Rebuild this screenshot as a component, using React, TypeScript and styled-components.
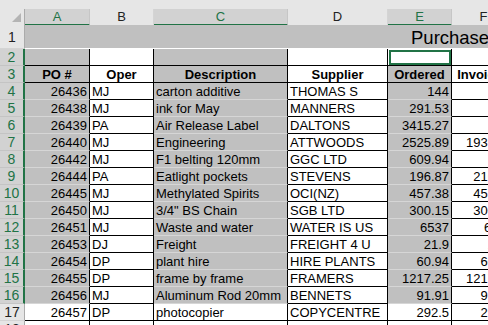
import React from 'react'
import styled, { createGlobalStyle } from 'styled-components'

const GlobalStyle = createGlobalStyle`
  body {
    margin: 0;
    background: #fff;
    font-family: 'Liberation Sans', Arial, sans-serif;
  }
`

const green = '#217346'
const cols = '25px 65px 64px 134px 100px 64px 64px'

const Sheet = styled.div`
  width: 488px;
  height: 325px;
  overflow: hidden;
  background: #fff;
`

const TopBand = styled.div`
  height: 9px;
  background: #e6e6e6;
`

const Row = styled.div<{ $h: number }>`
  display: grid;
  grid-template-columns: ${cols};
  height: ${(p) => p.$h}px;
`

const Corner = styled.div`
  background: #e6e6e6;
  border-right: 1px solid #ababab;
  border-bottom: 1px solid #ababab;
  box-sizing: border-box;
  display: flex;
  align-items: flex-end;
  justify-content: flex-end;
  padding: 0 3px 3px 0;
`

const ColHead = styled.div<{ $sel?: boolean }>`
  box-sizing: border-box;
  background: ${(p) => (p.$sel ? '#d2d2d2' : '#e6e6e6')};
  color: ${(p) => (p.$sel ? green : '#222')};
  border-right: 1px solid ${(p) => (p.$sel ? '#c6c6c6' : '#d4d4d4')};
  border-bottom: ${(p) => (p.$sel ? `2px solid ${green}` : '1px solid #ababab')};
  font-size: 13px;
  line-height: 15px;
  text-align: center;
`

const RowHead = styled.div<{ $sel?: boolean }>`
  box-sizing: border-box;
  background: ${(p) => (p.$sel ? '#d2d2d2' : '#e6e6e6')};
  color: ${(p) => (p.$sel ? green : '#222')};
  border-right: ${(p) => (p.$sel ? `2px solid ${green}` : '1px solid #ababab')};
  border-bottom: 1px solid ${(p) => (p.$sel ? '#c4c4c4' : '#d4d4d4')};
  font-size: 14px;
  display: flex;
  align-items: center;
  justify-content: center;
`

const TitleCell = styled.div`
  grid-column: 2 / -1;
  box-sizing: border-box;
  background: #c0c0c0;
  border-bottom: 1px solid #fff;
  padding: 2px 0 0 386px;
  font-size: 18.5px;
  line-height: 22px;
  white-space: nowrap;
  overflow: hidden;
  color: #000;
`

const Cell = styled.div<{ $gray?: boolean; $align?: string; $bold?: boolean; $soft?: boolean; $active?: boolean }>`
  box-sizing: border-box;
  background: ${(p) => (p.$gray ? '#c0c0c0' : '#fff')};
  border-right: 1px solid #000;
  border-bottom: 1px solid ${(p) => (p.$soft ? '#d6d6d6' : '#000')};
  text-align: ${(p) => p.$align || 'left'};
  font-weight: ${(p) => (p.$bold ? 700 : 400)};
  font-size: 13px;
  line-height: 17px;
  padding: 0 2px;
  white-space: nowrap;
  overflow: hidden;
  color: #000;
  ${(p) => (p.$active ? `outline: 2px solid ${green}; outline-offset: -3px;` : '')}
`

const rows: [number, string, string, string, string, string, string][] = [
  [4, '26436', 'MJ', 'carton additive', 'THOMAS S', '144', ''],
  [5, '26438', 'MJ', 'ink for May', 'MANNERS', '291.53', ''],
  [6, '26439', 'PA', 'Air Release Label', 'DALTONS', '3415.27', ''],
  [7, '26440', 'MJ', 'Engineering', 'ATTWOODS', '2525.89', '1936.89'],
  [8, '26442', 'MJ', 'F1 belting 120mm', 'GGC LTD', '609.94', ''],
  [9, '26444', 'PA', 'Eatlight pockets', 'STEVENS', '196.87', '216.55'],
  [10, '26445', 'MJ', 'Methylated Spirits', 'OCI(NZ)', '457.38', '457.38'],
  [11, '26450', 'MJ', '3/4" BS Chain', 'SGB LTD', '300.15', '300.15'],
  [12, '26451', 'MJ', 'Waste and water', 'WATER IS US', '6537', '6537'],
  [13, '26453', 'DJ', 'Freight', 'FREIGHT 4 U', '21.9', '21.9'],
  [14, '26454', 'DP', 'plant hire', 'HIRE PLANTS', '60.94', '60.94'],
  [15, '26455', 'DP', 'frame by frame', 'FRAMERS', '1217.25', '1217.25'],
  [16, '26456', 'MJ', 'Aluminum Rod 20mm', 'BENNETS', '91.91', '91.91'],
  [17, '26457', 'DP', 'photocopier', 'COPYCENTRE', '292.5', '292.5'],
]

export default function App() {
  return (
    <Sheet>
      <GlobalStyle />
      <TopBand />
      <Row $h={16}>
        <Corner>
          <svg width="9" height="9" viewBox="0 0 9 9">
            <polygon points="9,0 9,9 0,9" fill="#b4b4b4" />
          </svg>
        </Corner>
        {['A', 'B', 'C', 'D', 'E', 'F'].map((c, i) => (
          <ColHead key={c} $sel={i % 2 === 0}>{c}</ColHead>
        ))}
      </Row>
      <Row $h={24}>
        <RowHead>1</RowHead>
        <TitleCell>Purchase Orders</TitleCell>
      </Row>
      <Row $h={17}>
        <RowHead $sel>2</RowHead>
        <Cell $gray />
        <Cell />
        <Cell $gray />
        <Cell />
        <Cell $active />
        <Cell />
      </Row>
      <Row $h={17}>
        <RowHead $sel>3</RowHead>
        <Cell $gray $bold $align="center">PO #</Cell>
        <Cell $bold $align="center">Oper</Cell>
        <Cell $gray $bold $align="center">Description</Cell>
        <Cell $bold $align="center">Supplier</Cell>
        <Cell $gray $bold $align="center">Ordered</Cell>
        <Cell $bold $align="center">Invoiced</Cell>
      </Row>
      {rows.map(([n, po, op, desc, sup, ord, inv]) => {
        const sel = n < 17
        return (
          <Row $h={17} key={n}>
            <RowHead $sel={sel}>{n}</RowHead>
            <Cell $gray={sel} $soft={sel} $align="right">{po}</Cell>
            <Cell>{op}</Cell>
            <Cell $gray={sel} $soft={sel}>{desc}</Cell>
            <Cell>{sup}</Cell>
            <Cell $gray={sel} $soft={sel} $align="right">{ord}</Cell>
            <Cell $align="right">{inv}</Cell>
          </Row>
        )
      })}
      <Row $h={17}>
        <RowHead>18</RowHead>
        <Cell />
        <Cell />
        <Cell />
        <Cell />
        <Cell />
        <Cell />
      </Row>
    </Sheet>
  )
}
